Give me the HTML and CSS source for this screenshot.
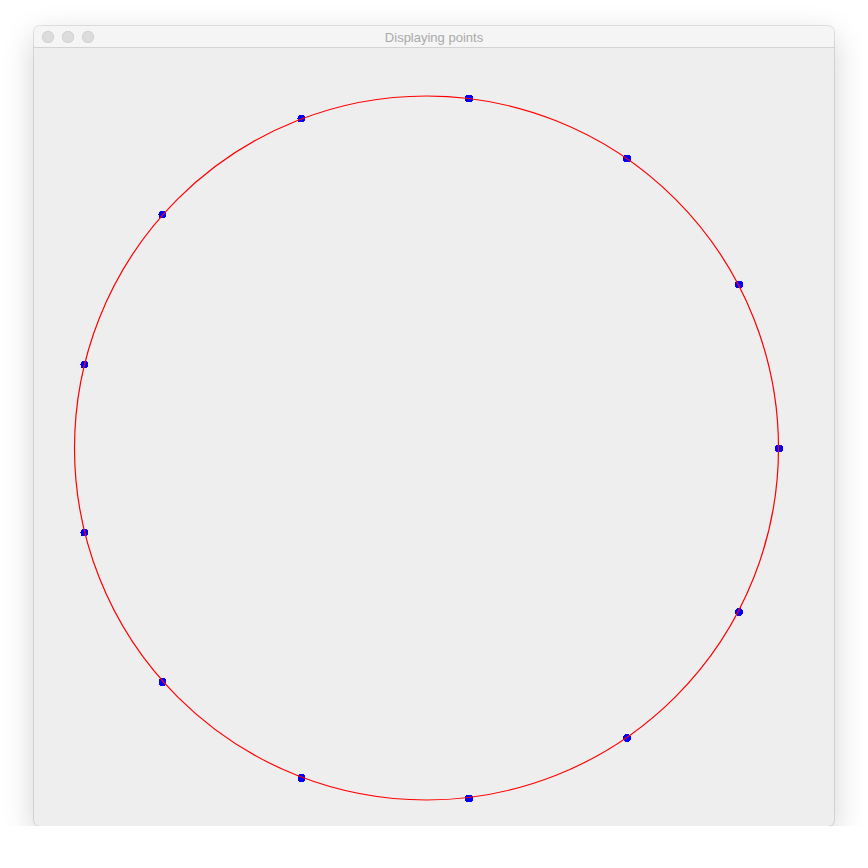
FILE: index.html
```html
<!DOCTYPE html>
<html lang="en">
<head>
    <meta charset="UTF-8">
    <title>Displaying points</title>
    <link rel="stylesheet" href="styles.css">
</head>
<body>
    <div class="window">
        <div class="titlebar">
            <div class="lights">
                <span class="light"></span>
                <span class="light"></span>
                <span class="light"></span>
            </div>
            <div class="title">Displaying points</div>
        </div>
        <div class="content">
            <svg class="canvas" width="800" height="778" viewBox="0 0 800 778">
                <g fill="#0000ff" shape-rendering="crispEdges">
                    <circle cx="745" cy="400.5" r="4"/>
                    <circle cx="705" cy="564" r="4"/>
                    <circle cx="593" cy="690" r="4"/>
                    <circle cx="435" cy="750.5" r="4"/>
                    <circle cx="267.5" cy="730" r="4"/>
                    <circle cx="128.5" cy="634" r="4"/>
                    <circle cx="50.5" cy="484.5" r="4"/>
                    <circle cx="50.5" cy="316.5" r="4"/>
                    <circle cx="128.5" cy="166.5" r="4"/>
                    <circle cx="267.5" cy="70.5" r="4"/>
                    <circle cx="435" cy="50.5" r="4"/>
                    <circle cx="593" cy="110.5" r="4"/>
                    <circle cx="705" cy="236.5" r="4"/>
                </g>
                <!-- curve is painted over the points -->
                <circle cx="392.5" cy="400" r="352" fill="none" stroke="#ff0000" stroke-width="1.2"/>
            </svg>
        </div>
    </div>
</body>
</html>
```

FILE: styles.css
```css
/* Page */
body {
    margin: 0;
    padding: 26px 0 0 34px;
    background-color: #ffffff;
    font-family: "Liberation Sans", Arial, sans-serif;
}

/* Window frame */
.window {
    width: 800px;
    height: 800px;
    border-radius: 6px;
    overflow: hidden;
    background-color: #eeeeee;
    box-shadow: 0 0 0 1px rgba(0, 0, 0, 0.1), 0 10px 32px rgba(0, 0, 0, 0.18);
    display: flex;
    flex-direction: column;
}

.titlebar {
    height: 21px;
    background-color: #f5f5f5;
    border-bottom: 1px solid #d3d3d3;
    display: flex;
    align-items: center;
    position: relative;
    flex-shrink: 0;
}

.lights {
    display: flex;
    gap: 8px;
    padding-left: 8px;
}

.light {
    width: 12px;
    height: 12px;
    border-radius: 50%;
    background-color: #dcdcdc;
    box-shadow: inset 0 0 0 0.5px #c8c8c8;
}

.title {
    position: absolute;
    top: 4px;
    left: 0;
    right: 0;
    text-align: center;
    font-size: 13px;
    line-height: 16px;
    color: #a9a9a9;
}

.content {
    flex: 1;
}

.canvas {
    display: block;
}
```
